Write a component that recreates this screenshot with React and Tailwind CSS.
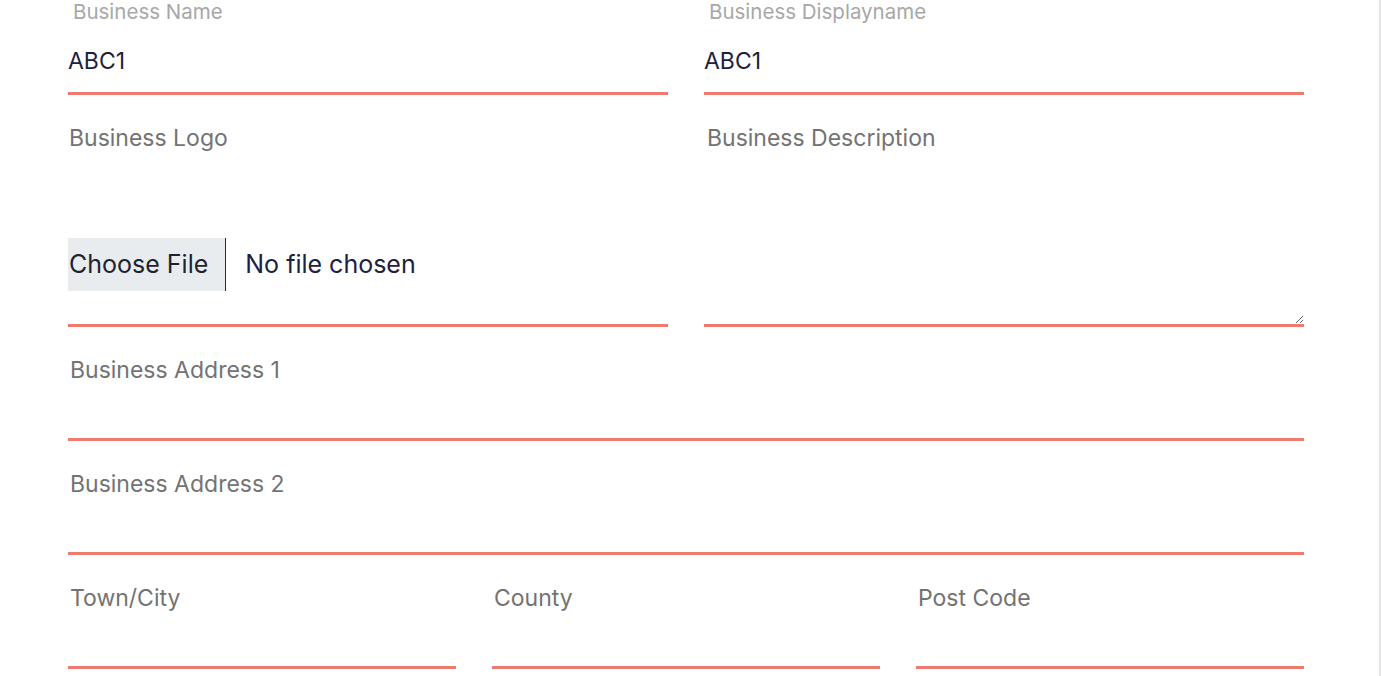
import React from 'react';

const line = 'border-b-[3px] border-[#ef7a70]';

const Label = ({ children, className = '' }) => (
  <label className={`block h-[32px] leading-[32px] text-[23px] text-[#737373] ${className}`}>{children}</label>
);

const TextField = ({ label, className = '' }) => (
  <div className={`flex flex-col ${className}`}>
    <Label className="mt-[27px] pl-[2px]">{label}</Label>
    <input
      type="text"
      className={`h-[55px] w-full bg-transparent outline-none text-[23px] text-[#1d2140] ${line}`}
    />
  </div>
);

const FilledField = ({ label, value }) => (
  <div className="flex flex-col">
    <label className="block h-[24px] leading-[24px] pl-[5px] text-[20.5px] text-[#a8a8a8]">{label}</label>
    <input
      type="text"
      defaultValue={value}
      readOnly
      className={`h-[71px] w-full bg-transparent pt-[6px] outline-none text-[23px] text-[#1d2140] ${line}`}
    />
  </div>
);

export default function App() {
  return (
    <div className="h-[676px] w-full overflow-hidden border-r-2 border-[#e6e6e6] bg-white font-['Inter','Noto_Sans',sans-serif]">
      <form className="w-[1236px] ml-[68px] flex flex-col">
        <div className="grid grid-cols-2 gap-x-9">
          <FilledField label="Business Name" value="ABC1" />
          <FilledField label="Business Displayname" value="ABC1" />
        </div>

        <div className="grid grid-cols-2 gap-x-9">
          <div className={`flex flex-col ${line}`}>
            <Label className="mt-[27px] pl-[1px]">Business Logo</Label>
            <div className="mt-[84px] mb-[32px] flex h-[53px] items-center">
              <span className="flex h-full items-center border-r border-[#2a2a2a] bg-[#e9ecef] pl-[1px] pr-[17px] text-[25px] text-[#1f2330]">
                Choose File
              </span>
              <span className="ml-[19px] text-[25px] text-[#1d2140]">No file chosen</span>
            </div>
          </div>
          <div className="flex flex-col">
            <Label className="mt-[27px] pl-[3px] text-[23.5px]">Business Description</Label>
            <textarea
              className={`h-[173px] w-full resize-y bg-transparent outline-none text-[23px] text-[#1d2140] ${line}`}
            />
          </div>
        </div>

        <TextField label="Business Address 1" />
        <TextField label="Business Address 2" />

        <div className="grid grid-cols-3 gap-x-9">
          <TextField label="Town/City" />
          <TextField label="County" />
          <TextField label="Post Code" />
        </div>
      </form>
    </div>
  );
}
